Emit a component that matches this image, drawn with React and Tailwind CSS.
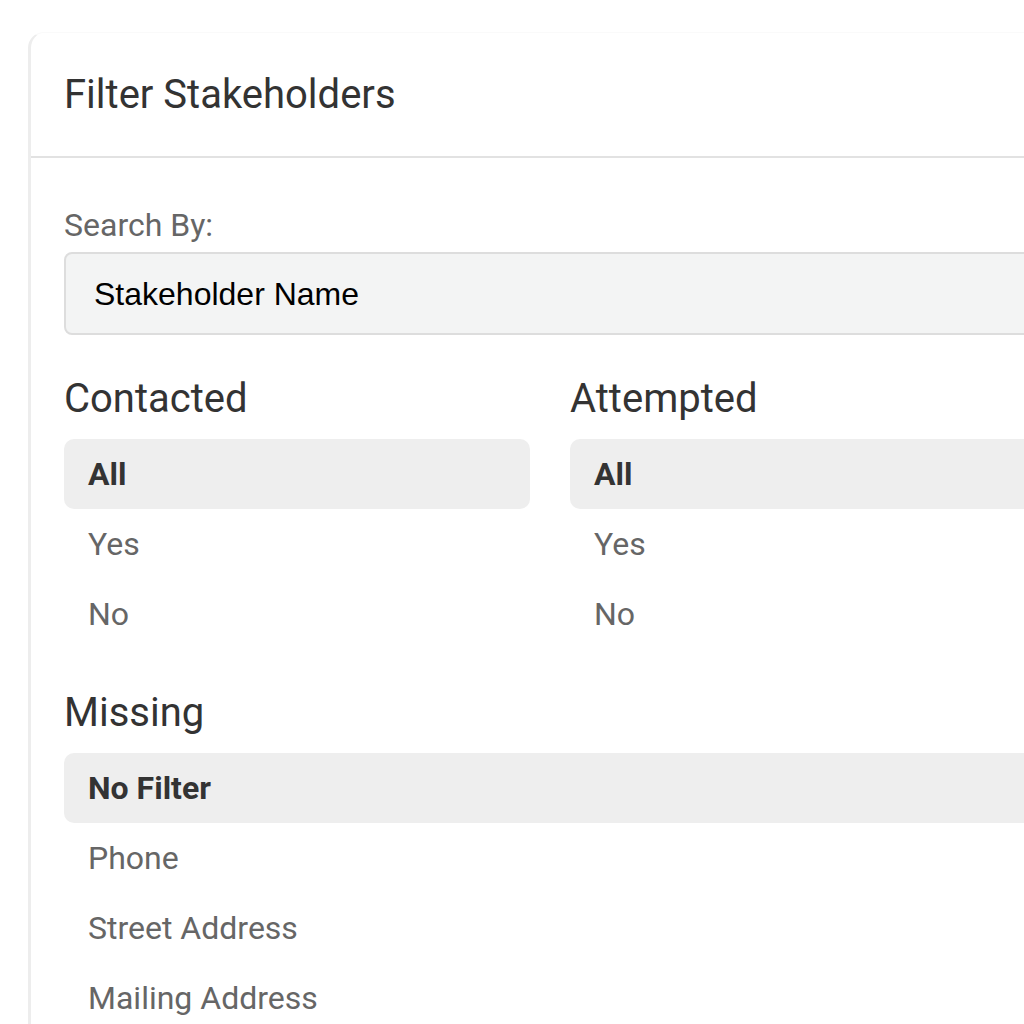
const contacted = ['All', 'Yes', 'No'];
const attempted = ['All', 'Yes', 'No'];
const missing = ['No Filter', 'Phone', 'Street Address', 'Mailing Address'];

function OptionList({ options, active }) {
  return (
    <div className="flex flex-col">
      {options.map((opt) => (
        <div
          key={opt}
          className={
            opt === active
              ? 'h-[70px] flex items-center pl-6 rounded-[10px] bg-[#eeeeee] text-[32px] font-bold text-[#333333]'
              : 'h-[70px] flex items-center pl-6 text-[32px] text-[#666666]'
          }
        >
          {opt}
        </div>
      ))}
    </div>
  );
}

function Group({ title, options, active }) {
  return (
    <div className="flex flex-col">
      <h3 className="text-[40px] leading-[48px] text-[#333333] mb-4">{title}</h3>
      <OptionList options={options} active={active} />
    </div>
  );
}

export default function App() {
  return (
    <div
      className="w-screen h-screen overflow-hidden bg-white pt-8 pl-[28px]"
      style={{ fontFamily: 'Roboto, "Liberation Sans", sans-serif' }}
    >
      <div className="w-[1041px] min-h-[1100px] bg-white rounded-tl-[16px] border-l-[3px] border-t border-[#ededed] border-t-[#fafafa]">
        <div className="px-[33px] pt-[37px] pb-[36px] border-b-2 border-[#e2e2e2]">
          <h2 className="text-[40px] leading-[50px] text-[#333333]">Filter Stakeholders</h2>
        </div>

        <div className="px-[33px] pt-[47px]">
          <label className="block text-[32px] leading-[40px] text-[#666666] mb-[7px]">Search By:</label>
          <div className="h-[83px] flex items-center pl-[28px] bg-[#f3f4f4] border-2 border-[#dddddd] rounded-[8px]">
            <span className="text-[32px] text-black" style={{ fontFamily: '"Liberation Sans", Arial, sans-serif' }}>
              Stakeholder Name
            </span>
          </div>

          <div className="grid grid-cols-2 gap-10 mt-10">
            <Group title="Contacted" options={contacted} active="All" />
            <Group title="Attempted" options={attempted} active="All" />
          </div>

          <div className="mt-10">
            <Group title="Missing" options={missing} active="No Filter" />
          </div>
        </div>
      </div>
    </div>
  );
}
